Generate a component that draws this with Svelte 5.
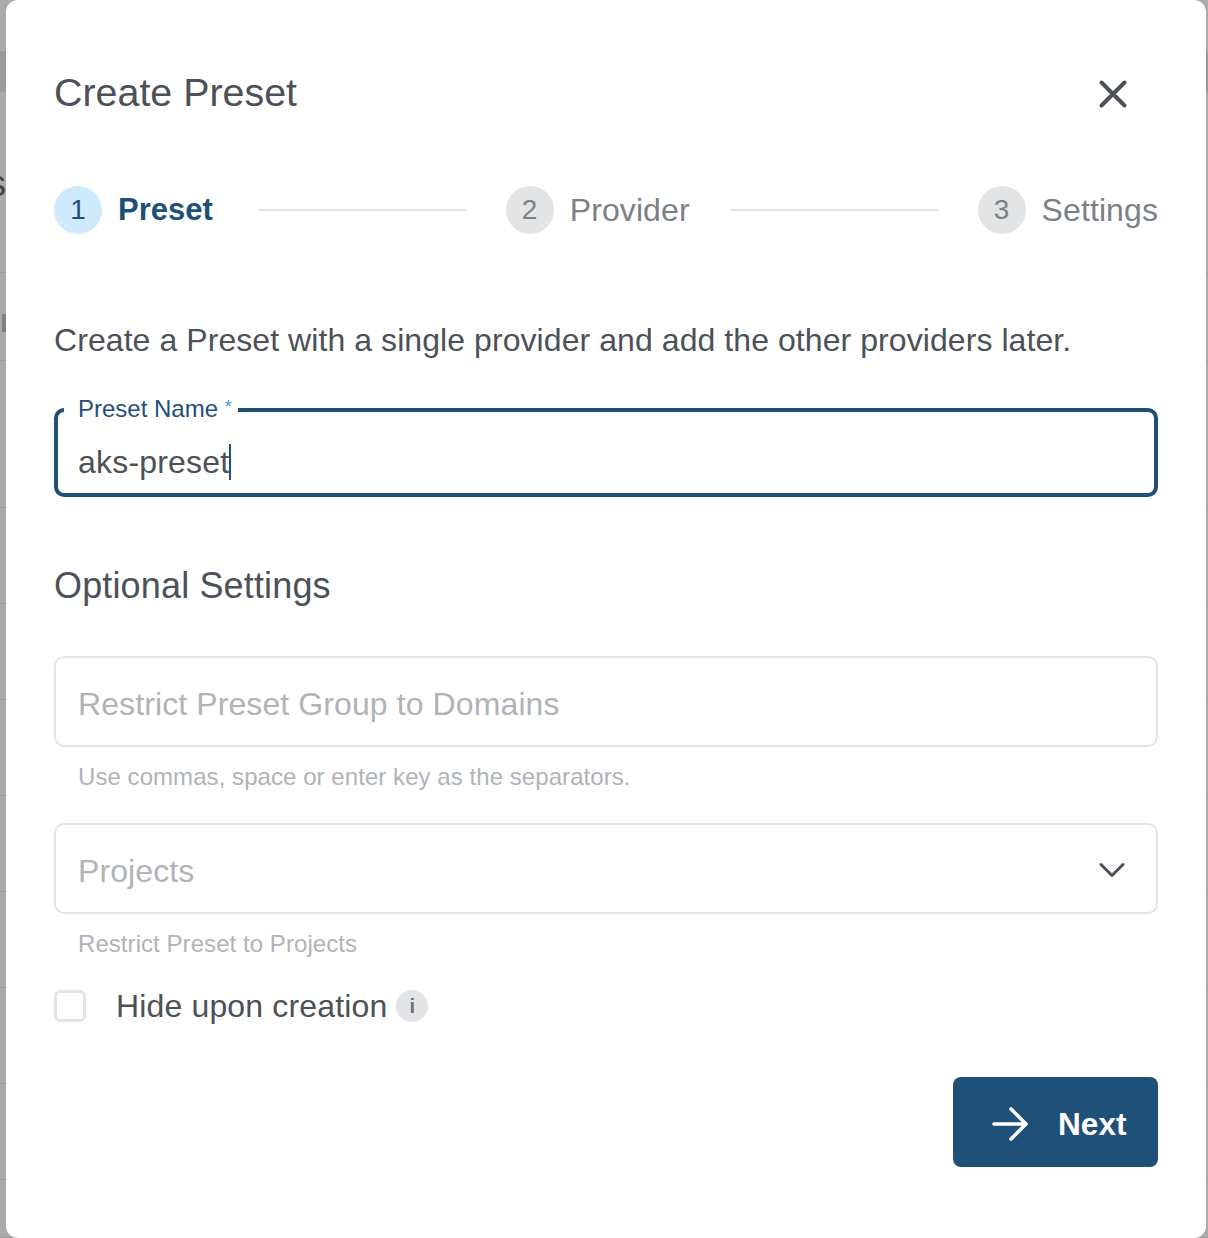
<script>
  const steps = [
    { n: 1, label: 'Preset', active: true },
    { n: 2, label: 'Provider', active: false },
    { n: 3, label: 'Settings', active: false }
  ];
  const rows = [52, 40, 181, 88, 147, 96, 96, 96, 96, 96, 96, 96, 58];
</script>

<div class="backdrop">
  {#each rows as h, i}
    <div class="row" class:band={i === 1} style="height: {h}px">
      {#if i === 2}<span class="peek">s</span>{/if}
      {#if i === 3}<span class="peek-bar"></span>{/if}
    </div>
  {/each}
</div>

<div class="modal" role="dialog" aria-modal="true">
  <header class="head">
    <h2>Create Preset</h2>
    <button class="close" aria-label="Close">
      <svg width="30" height="30" viewBox="0 0 30 30" fill="none" stroke="#4c5158" stroke-width="4" stroke-linecap="round">
        <path d="M3.5 3.5 L26.5 26.5 M26.5 3.5 L3.5 26.5" />
      </svg>
    </button>
  </header>

  <div class="stepper">
    {#each steps as step, i}
      {#if i > 0}<span class="line"></span>{/if}
      <div class="step" class:active={step.active}>
        <span class="num">{step.n}</span>
        <span class="name">{step.label}</span>
      </div>
    {/each}
  </div>

  <p class="intro">Create a Preset with a single provider and add the other providers later.</p>

  <fieldset class="field focus">
    <legend>Preset Name <span class="req">*</span></legend>
    <div class="value"><span class="caret">aks-preset</span></div>
  </fieldset>

  <h3>Optional Settings</h3>

  <div class="box">
    <input placeholder="Restrict Preset Group to Domains" />
  </div>
  <div class="hint">Use commas, space or enter key as the separators.</div>

  <div class="box select">
    <input placeholder="Projects" />
    <svg width="26" height="16" viewBox="0 0 26 16" fill="none" stroke="#4c5158" stroke-width="3" stroke-linecap="round" stroke-linejoin="round">
      <path d="M2 2.5 L13 13.5 L24 2.5" />
    </svg>
  </div>
  <div class="hint">Restrict Preset to Projects</div>

  <div class="check">
    <span class="tick"></span>
    <span class="check-label">Hide upon creation</span>
    <span class="info">i</span>
  </div>

  <div class="actions">
    <button class="next">
      <svg width="38" height="36" viewBox="0 0 38 36" fill="none" stroke="#fff" stroke-width="3.6" stroke-linecap="round" stroke-linejoin="round">
        <path d="M3 18 H35 M20 3 L35 18 L20 33" />
      </svg>
      <span>Next</span>
    </button>
  </div>
</div>

<style>
  :global(body) {
    margin: 0;
    height: 1238px;
    overflow: hidden;
    background: #ababab;
    font-family: "Liberation Sans", Arial, sans-serif;
  }

  .row {
    position: relative;
    box-sizing: border-box;
    border-bottom: 1px solid #9e9e9e;
  }

  .row.band {
    background: #999b9d;
    border-bottom: none;
  }

  .peek {
    position: absolute;
    top: 72px;
    left: -12px;
    font-size: 36px;
    line-height: 40px;
    color: #444;
  }

  .peek-bar {
    position: absolute;
    top: 41px;
    left: 2px;
    width: 4px;
    height: 18px;
    background: #808080;
  }

  .modal {
    position: absolute;
    top: 0;
    left: 6px;
    width: 1200px;
    height: 1238px;
    box-sizing: border-box;
    padding: 0 48px;
    background: #fff;
    border-radius: 12px;
    color: #4c5158;
  }

  .head {
    display: flex;
    justify-content: space-between;
    align-items: center;
    height: 186px;
  }

  h2 {
    margin: 0 0 2px;
    font-size: 39.4px;
    font-weight: 400;
  }

  .close {
    background: none;
    border: none;
    padding: 0;
    margin: 1px 30px 0 0;
    display: flex;
  }

  .stepper {
    display: flex;
    align-items: center;
    height: 48px;
  }

  .step {
    display: flex;
    align-items: center;
    gap: 16px;
    font-size: 32px;
    letter-spacing: 0.1px;
    color: #7b8087;
  }

  .num {
    width: 48px;
    height: 48px;
    border-radius: 50%;
    background: #e3e4e6;
    display: flex;
    align-items: center;
    justify-content: center;
    font-size: 28px;
  }

  .step.active .num {
    background: #cfeafd;
    color: #1f5078;
  }

  .step.active .name {
    margin-right: 5px;
    color: #1f5078;
    font-size: 31px;
    font-weight: 700;
    letter-spacing: 0;
  }

  .line {
    flex: 1;
    height: 2px;
    background: #e1e4e8;
    margin: 0 40px;
  }

  .intro {
    margin: 86px 0 0;
    font-size: 32px;
    line-height: 40px;
    letter-spacing: 0.07px;
  }

  .field {
    margin: 33px 0 0;
    padding: 0 6px;
    height: 104px;
    box-sizing: border-box;
    border: 4px solid #1f5078;
    border-radius: 10px;
    min-width: 0;
  }

  legend {
    padding: 0 6px 4px 14px;
    font-size: 24px;
    line-height: 28px;
    color: #1f5078;
  }

  .req {
    color: #3a9be8;
    font-size: 18px;
    vertical-align: 4px;
  }

  .value {
    padding-left: 14px;
    font-size: 32px;
    line-height: 36px;
    letter-spacing: 0.2px;
    margin-top: 17px;
  }

  .caret {
    display: inline-block;
    border-right: 2px solid #1f5078;
  }

  h3 {
    margin: 67px 0 0;
    font-size: 36px;
    line-height: 44px;
    font-weight: 400;
    letter-spacing: 0.15px;
  }

  .box {
    margin-top: 48px;
    height: 91px;
    box-sizing: border-box;
    border: 2px solid #e3e4e6;
    border-radius: 10px;
    display: flex;
    align-items: center;
    padding: 0 32px 0 22px;
  }

  .box svg {
    margin: 3px -1px 0 0;
  }

  .box input {
    flex: 1;
    border: none;
    outline: none;
    background: none;
    padding: 6px 0 0;
    font: inherit;
    font-size: 32px;
    letter-spacing: 0.1px;
  }

  .box input::placeholder {
    color: #b0b3b7;
    opacity: 1;
  }

  .hint {
    margin: 16px 0 0 24px;
    font-size: 24px;
    line-height: 28px;
    letter-spacing: 0.06px;
    color: #b0b3b7;
  }

  .hint + .box {
    margin-top: 32px;
  }

  .check {
    display: flex;
    align-items: center;
    margin-top: 30px;
    height: 36px;
  }

  .tick {
    width: 32px;
    height: 32px;
    box-sizing: border-box;
    border: 3px solid #e3e4e6;
    border-radius: 6px;
  }

  .check-label {
    margin-left: 30px;
    font-size: 32px;
    letter-spacing: 0.15px;
  }

  .info {
    width: 32px;
    height: 32px;
    margin-left: 9px;
    border-radius: 50%;
    background: #e3e4e6;
    display: flex;
    align-items: center;
    justify-content: center;
    font-size: 20px;
    font-weight: 700;
    color: #6b7077;
  }

  .actions {
    display: flex;
    justify-content: flex-end;
    margin-top: 53px;
  }

  .next {
    display: flex;
    align-items: center;
    gap: 29px;
    width: 205px;
    height: 90px;
    padding: 4px 0 0 38px;
    box-sizing: border-box;
    border: none;
    border-radius: 8px;
    background: #1f5078;
    color: #fff;
    font: inherit;
    font-size: 31.6px;
    font-weight: 700;
  }
</style>
